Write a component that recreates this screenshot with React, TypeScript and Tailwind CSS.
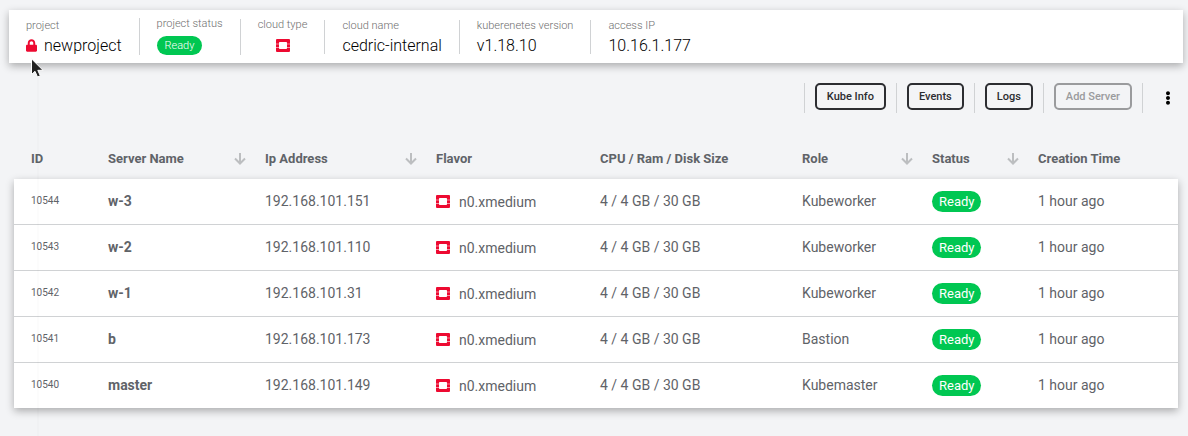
import type { ReactNode } from "react";
import { FaEllipsisV, FaLock } from "react-icons/fa";

function OpenStackIcon() {
  return (
    <svg viewBox="0 0 14 14" className="h-3.5 w-3.5 shrink-0 fill-[#ed0a31]" role="img" aria-label="OpenStack">
      <path d="M1 0h12a1 1 0 0 1 1 1v3.700h-3V3.700a.7.7 0 0 0-.7-.7H3.700a.7.7 0 0 0-.7.7v1H0V1a1 1 0 0 1 1-1z" />
      <path d="M1 13h12a1 1 0 0 0 1-1V8.700h-3v.6a.7.7 0 0 1-.7.7H3.700a.7.7 0 0 1-.7-.7v-.6H0V12a1 1 0 0 0 1 1z" />
      <path d="M0 5.200h3v3H0zM11 5.200h3v3h-3z" />
    </svg>
  );
}

function SortIcon() {
  return (
    <svg viewBox="0 0 12 12" className="h-3 w-3 fill-none stroke-current stroke-2" aria-hidden="true">
      <path d="M6 0v10.500M1 5.500l5 5 5-5" />
    </svg>
  );
}

function Info({ label, center, children }: { label: string; center?: boolean; children: ReactNode }) {
  return (
    <div
      className={`flex flex-col border-l border-[#d0d2d4] px-[17px] first:border-l-0 ${center ? "items-center" : "items-start"}`}
    >
      <span className="text-[11px] leading-3 text-[#6e6e6e]">{label}</span>
      {children}
    </div>
  );
}

function Value({ children }: { children: ReactNode }) {
  return <div className="flex h-[22px] items-center gap-[7px] pt-1.5 text-base leading-4 text-black">{children}</div>;
}

function Action({ children, disabled }: { children: ReactNode; disabled?: boolean }) {
  return (
    <div className="flex h-[30px] items-start border-l border-[#d0d2d4] px-2.5">
      <button
        type="button"
        disabled={disabled}
        className="h-[27px] rounded-[5px] border-2 border-[#2c2d31] px-2.5 pt-px text-[11px] font-medium text-[#2c2d31] disabled:border-[#9a9b9d] disabled:text-[#9a9b9d]"
      >
        {children}
      </button>
    </div>
  );
}

const columns = [
  { name: "ID", width: "w-[77px]", sortable: false },
  { name: "Server Name", width: "w-[157px]", sortable: true },
  { name: "Ip Address", width: "w-[171px]", sortable: true },
  { name: "Flavor", width: "w-[164px]", sortable: false },
  { name: "CPU / Ram / Disk Size", width: "w-[202px]", sortable: false },
  { name: "Role", width: "w-[130px]", sortable: true },
  { name: "Status", width: "w-[106px]", sortable: true },
  { name: "Creation Time", width: "", sortable: false },
];

const servers = [
  { id: 10544, name: "w-3", ip: "192.168.101.151", role: "Kubeworker" },
  { id: 10543, name: "w-2", ip: "192.168.101.110", role: "Kubeworker" },
  { id: 10542, name: "w-1", ip: "192.168.101.31", role: "Kubeworker" },
  { id: 10541, name: "b", ip: "192.168.101.173", role: "Bastion" },
  { id: 10540, name: "master", ip: "192.168.101.149", role: "Kubemaster" },
];

export default function App() {
  return (
    <div className="relative min-h-screen bg-[#f3f4f6] pt-2.5 pb-7 font-[Roboto,sans-serif] text-[#5f6368]">
      <header className="mr-[5px] ml-[9px] flex h-[53px] items-center bg-white font-light shadow-[0_3px_8px_rgba(0,0,0,0.3)]">
        <Info label="project">
          <Value>
            <FaLock className="h-[13px] w-[11px] text-[#ed0a31]" />
            newproject
          </Value>
        </Info>
        <Info label="project status">
          <span className="mt-1.5 flex h-[19px] items-center rounded-full bg-[#00c752] px-2 pt-px text-[11px] text-white">
            Ready
          </span>
        </Info>
        <Info label="cloud type" center>
          <div className="flex h-6 items-center pt-1.5">
            <OpenStackIcon />
          </div>
        </Info>
        <Info label="cloud name">
          <Value>cedric-internal</Value>
        </Info>
        <Info label="kuberenetes version">
          <Value>v1.18.10</Value>
        </Info>
        <Info label="access IP">
          <Value>10.16.1.177</Value>
        </Info>
      </header>

      <div className="mt-5 flex justify-end pr-[13px]">
        <Action>Kube Info</Action>
        <Action>Events</Action>
        <Action>Logs</Action>
        <Action disabled>Add Server</Action>
        <div className="flex h-[30px] items-center border-l border-[#d0d2d4] pl-[18px]">
          <button type="button" aria-label="More actions" className="p-0 text-black">
            <FaEllipsisV className="h-3.5 w-3.5" />
          </button>
        </div>
      </div>

      <div className="mt-[26px] mr-2.5 ml-3.5">
        <div className="relative">
          <div className="absolute inset-x-0 top-10 bottom-0 bg-white shadow-[0_3px_8px_rgba(0,0,0,0.3)]" />
          <table className="relative w-full table-fixed border-separate border-spacing-0 text-left text-sm">
            <thead>
              <tr className="h-10">
                {columns.map((c) => (
                  <th key={c.name} className={`${c.width} p-0 pr-0.5 pl-[17px] text-[13px] font-bold`}>
                    <div className="flex items-center justify-between whitespace-nowrap">
                      {c.name}
                      {c.sortable && (
                        <button type="button" aria-label={`Sort by ${c.name}`} className="text-[#bcbec0]">
                          <SortIcon />
                        </button>
                      )}
                    </div>
                  </th>
                ))}
              </tr>
            </thead>
            <tbody className="[&_td]:border-b [&_td]:border-[#d0d2d4] [&_td]:pl-[17px] [&>tr:last-child>td]:border-b-0">
              {servers.map((s) => (
                <tr key={s.id} className="h-[46px] last:h-[45px]">
                  <td className="text-[10px]">{s.id}</td>
                  <td className="pb-0.5 font-bold">{s.name}</td>
                  <td className="pb-0.5">{s.ip}</td>
                  <td>
                    <div className="flex items-center gap-[9px]">
                      <OpenStackIcon />
                      n0.xmedium
                    </div>
                  </td>
                  <td className="pb-0.5">4 / 4 GB / 30 GB</td>
                  <td className="pb-0.5">{s.role}</td>
                  <td>
                    <span className="flex h-[21px] w-fit items-center rounded-full bg-[#00c752] px-[7px] pt-px text-[13px] text-white">
                      Ready
                    </span>
                  </td>
                  <td className="pb-0.5">1 hour ago</td>
                </tr>
              ))}
            </tbody>
          </table>
        </div>
      </div>

      <div className="pointer-events-none absolute top-16 bottom-0 left-[37px] w-0.5 bg-black/1" />
      <svg viewBox="0 0 14 20" className="pointer-events-none absolute top-[58px] left-[30px] h-5 w-3.5" aria-hidden="true">
        <path d="M1.500 .8v15.700l3.500-3.200 2.500 5.700 2.800-1.200-2.500-5.500H13z" fill="#222" stroke="#fff" strokeWidth="1" />
      </svg>
    </div>
  );
}
